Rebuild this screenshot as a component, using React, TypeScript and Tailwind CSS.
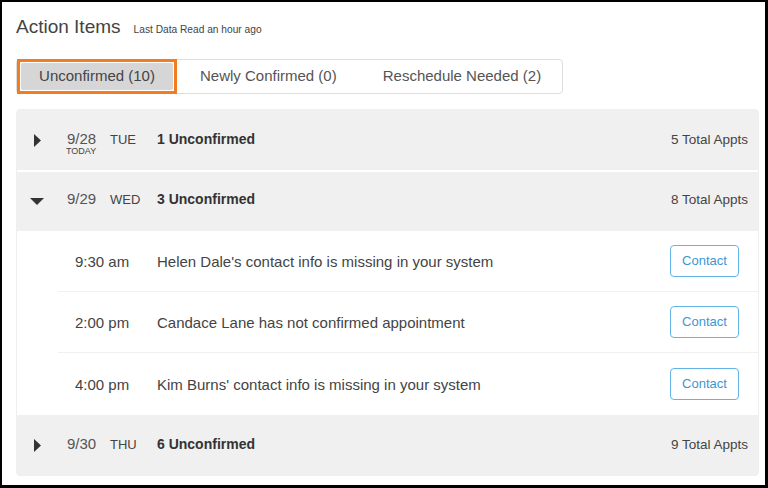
import React from "react";

function RightTri() {
  return (
    <svg width="7" height="13" viewBox="0 0 7 13">
      <polygon points="0,0 7,6.5 0,13" fill="#333" />
    </svg>
  );
}
function DownTri() {
  return (
    <svg width="14" height="7" viewBox="0 0 14 7">
      <polygon points="0,0 14,0 7,7" fill="#333" />
    </svg>
  );
}

function Header({
  date,
  day,
  label,
  total,
  open,
  today,
  h,
  nudge,
}: {
  date: string;
  day: string;
  label: string;
  total: string;
  open?: boolean;
  today?: boolean;
  h: string;
  nudge?: boolean;
}) {
  return (
    <div className={`flex items-center pr-[10px] ${h}`}>
      <div className="flex w-[50px] pl-[13px]">
        <div className="flex w-[14px] items-center justify-center">
          {open ? <DownTri /> : <RightTri />}
        </div>
      </div>
      <div className={`flex flex-1 items-baseline ${nudge ? "pb-[4px]" : ""}`}>
        <div className="relative w-[43px] text-[15px] leading-[17px] text-[#555]">
          {date}
          {today && (
            <span className="absolute left-[-1px] top-[16px] text-[9px] leading-[10px] text-[#444]">
              TODAY
            </span>
          )}
        </div>
        <div className="w-[47px] text-[13px] text-[#444]">{day}</div>
        <div className="flex-1 text-[14px] font-bold text-[#333]">{label}</div>
        <div className="text-[13.5px] text-[#444]">{total}</div>
      </div>
    </div>
  );
}

function Detail({ time, msg, last }: { time: string; msg: string; last?: boolean }) {
  return (
    <div
      className={`ml-[41px] flex items-center pr-[19px] ${
        last ? "h-[62px]" : "h-[61px] border-b border-[#f0f0f0]"
      }`}
    >
      <div className="w-[99px] pl-[17px] text-[15px] leading-[17px] text-[#444]">{time}</div>
      <div className="flex-1 text-[15px] leading-[17px] text-[#444]">{msg}</div>
      <button className="flex h-[32px] w-[69px] items-center justify-center rounded-[4px] border border-[#62b4e6] bg-white text-[13px] text-[#3b97d3]">
        Contact
      </button>
    </div>
  );
}

export default function App() {
  return (
    <div className="box-border h-[488px] w-[768px] overflow-hidden border-b-[3px] border-l-2 border-r-[3px] border-t-2 border-black bg-white pl-[14px] pt-[14px] font-[family-name:'Liberation_Sans',Arial,sans-serif]">
      <div className="flex items-baseline">
        <h1 className="text-[19px] leading-[22px] text-[#444]">Action Items</h1>
        <span className="ml-[13px] text-[10.2px] text-[#444]">Last Data Read an hour ago</span>
      </div>

      <div className="mt-[21px] flex h-[35px] w-[547px] whitespace-nowrap rounded-[4px] border border-[#dddddd] text-[15px] text-[#555]">
        <div className="-my-px flex h-[35px] w-[160px] shrink-0 border-[3px] border-[#f47b20] bg-white p-px">
          <div className="flex flex-1 items-center justify-center rounded-[2px] bg-[#d6d6d6] text-[#444]">
            Unconfirmed (10)
          </div>
        </div>
        <div className="flex items-center px-[23px]">Newly Confirmed (0)</div>
        <div className="flex items-center px-[23px]">Reschedule Needed (2)</div>
      </div>

      <div className="mt-[15px] w-[743px] overflow-hidden rounded-[4px] border border-[#efefef] bg-[#f0f0f0] whitespace-nowrap">
        <Header h="h-[60px]" date="9/28" day="TUE" label="1 Unconfirmed" total="5 Total Appts" today />
        <div className="h-[2px] bg-white" />
        <Header h="h-[59px]" date="9/29" day="WED" label="3 Unconfirmed" total="8 Total Appts" open nudge />
        <div className="bg-white">
          <Detail time="9:30 am" msg="Helen Dale's contact info is missing in your system" />
          <Detail time="2:00 pm" msg="Candace Lane has not confirmed appointment" />
          <Detail time="4:00 pm" msg="Kim Burns' contact info is missing in your system" last />
        </div>
        <Header h="h-[60px]" date="9/30" day="THU" label="6 Unconfirmed" total="9 Total Appts" />
      </div>
    </div>
  );
}
